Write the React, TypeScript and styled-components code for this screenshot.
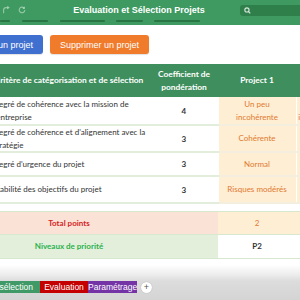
import * as React from "react";
import styled, { createGlobalStyle } from "styled-components";

const GlobalStyle = createGlobalStyle`
  html, body {
    margin: 0;
    padding: 0;
    background: #fff;
    overflow: hidden;
  }
  body {
    font-family: "Liberation Sans", Arial, sans-serif;
  }
`;

const Page = styled.div`
  width: 300px;
  height: 300px;
  overflow: hidden;
  background: #fff;
  display: flex;
  flex-direction: column;
`;

const Content = styled.div`
  flex: 1;
  min-height: 0;
  overflow: hidden;
  display: flex;
  flex-direction: column;
`;

const TopBar = styled.div`
  height: 25px;
  flex: none;
  background: #3e9a60;
  display: flex;
  flex-direction: column;
`;

const TopRow = styled.div`
  height: 19px;
  display: flex;
  align-items: center;
`;

const QuickIcons = styled.div`
  width: 36px;
  display: flex;
  align-items: center;
  gap: 8px;
  padding-left: 2px;
  color: rgba(255, 255, 255, 0.45);
`;

const Title = styled.div`
  flex: 1;
  text-align: center;
  color: #fff;
  font-weight: bold;
  font-size: 9px;
  padding-top: 1px;
`;

const SearchBox = styled.div`
  width: 56px;
  height: 11px;
  margin-top: 1px;
  background: #2f7f4b;
  border-radius: 3px 0 0 3px;
  display: flex;
  align-items: center;
  padding-left: 4px;
  color: rgba(255, 255, 255, 0.8);
`;

const Ribbon = styled.div`
  display: flex;
  height: 2px;
  margin-top: 1px;
`;

const RibbonSegment = styled.div<{ $w: number; $gap: number }>`
  width: ${(p) => p.$w}px;
  margin-left: ${(p) => p.$gap}px;
  height: 2px;
  border-radius: 1px;
  background: #2a7544;
`;

const ButtonRow = styled.div`
  width: 149px;
  height: 19px;
  margin-top: 10px;
  flex: none;
  display: flex;
  justify-content: flex-end;
  gap: 7px;
`;

const ActionButton = styled.button<{ $tone: "blue" | "orange" }>`
  flex: none;
  border: none;
  border-radius: 3px;
  padding: 0 10px;
  height: 19px;
  font-family: "Liberation Sans", Arial, sans-serif;
  font-size: 9px;
  color: #fff;
  white-space: nowrap;
  background: ${(p) => (p.$tone === "blue" ? "#3f6fcf" : "#f07b2b")};
  box-shadow: 0 1px 1px rgba(0, 0, 0, 0.12);
`;

const Table = styled.table`
  margin-top: 10px;
  margin-left: -12px;
  border-collapse: collapse;
  table-layout: fixed;
  width: 386px;
  font-family: Lato, "Liberation Sans", sans-serif;
  font-size: 8px;
  flex: none;

  td,
  th {
    padding-top: 0;
    padding-bottom: 0;
  }
`;

const HeadCell = styled.th`
  background: #3f8f5e;
  color: #fff;
  font-weight: bold;
  height: 33px;
  padding: 0 2px;
  text-align: center;
  line-height: 13px;
  font-size: 8.4px;
  white-space: nowrap;
`;

const LabelCell = styled.td`
  color: #333;
  padding: 0 4px 0 5px;
  line-height: 12.5px;
  border-bottom: 2px solid #e2eedb;
`;

const NumCell = styled.td`
  text-align: center;
  font-weight: bold;
  color: #333;
  border-bottom: 2px solid #e2eedb;
`;

const ValueCell = styled.td<{ $edge?: boolean }>`
  background: #fdeed4;
  color: #e27a2f;
  text-align: center;
  line-height: 12.5px;
  padding: ${(p) => (p.$edge ? "0 33px 0 1px" : "0 8px")};
  border-bottom: 2px solid #f3eedd;
  border-left: 1px solid #fff;
`;

const DataRow = styled.tr<{ $h: number }>`
  height: ${(p) => p.$h}px;
`;

const SpacerRow = styled.tr`
  height: 8px;
`;

const SumCell = styled.td<{ $kind: "total" | "priority" }>`
  background: ${(p) => (p.$kind === "total" ? "#fbe2d6" : "#e3efdb")};
  color: ${(p) => (p.$kind === "total" ? "#d42424" : "#2bb14e")};
  font-weight: bold;
  text-align: center;
  border-top: 1px solid #d8e8cf;
  border-bottom: 1px solid #d8e8cf;
`;

const SumValue = styled.td<{ $kind: "total" | "priority" }>`
  background: ${(p) => (p.$kind === "total" ? "#fdeed4" : "#fff")};
  color: ${(p) => (p.$kind === "total" ? "#e27a2f" : "#333")};
  font-weight: ${(p) => (p.$kind === "total" ? "normal" : "bold")};
  text-align: center;
  border-top: 1px solid #d8e8cf;
  border-bottom: 1px solid #d8e8cf;
`;

const Footer = styled.div`
  height: 35px;
  flex: none;
  background: linear-gradient(to bottom, #fff 0px, #ececec 10px, #dcdcdc 16px, #d4d4d4 35px);
  display: flex;
  align-items: flex-start;
  padding-top: 16px;
  box-sizing: border-box;
`;

const TabStrip = styled.div`
  width: 137px;
  display: flex;
  justify-content: flex-end;
`;

const SheetTab = styled.div<{ $bg: string; $w?: number }>`
  flex: none;
  height: 12px;
  line-height: 12px;
  ${(p) => (p.$w ? `width: ${p.$w}px;` : "padding: 0 7px;")}
  text-align: center;
  background: ${(p) => p.$bg};
  color: #fff;
  font-size: 8.5px;
  font-family: "Liberation Sans", Arial, sans-serif;
  white-space: nowrap;
`;

const AddSheet = styled.div`
  width: 11px;
  height: 11px;
  margin: 1px 0 0 4px;
  border-radius: 50%;
  background: #fff;
  color: #555;
  font-size: 9px;
  line-height: 11px;
  text-align: center;
  box-shadow: 0 0 1px rgba(0, 0, 0, 0.3);
`;

const rows = [
  { label: "Degré de cohérence avec la mission de l'entreprise", coef: 4, p1: "Un peu incohérente", p2: "Un peu incohérente", h: 28 },
  { label: "Degré de cohérence et d'alignement avec la stratégie", coef: 3, p1: "Cohérente", p2: "Cohérente", h: 24 },
  { label: "Degré d'urgence du projet", coef: 3, p1: "Normal", p2: "Normal", h: 24 },
  { label: "Stabilité des objectifs du projet", coef: 3, p1: "Risques modérés", p2: "Risques modérés", h: 24 },
];

const ribbon = [
  [10, 0],
  [26, 12],
  [45, 12],
  [27, 11],
  [46, 11],
];

export default function App() {
  return (
    <Page>
      <GlobalStyle />
      <Content>
        <TopBar>
          <TopRow>
            <QuickIcons>
              <svg width="8" height="8" viewBox="0 0 10 10" fill="none" stroke="currentColor" strokeWidth="1.4">
                <path d="M2 9V5a3 3 0 0 1 3-3h3" />
                <path d="M6.5 0.5 8.5 2 6.5 3.5" />
              </svg>
              <svg width="8" height="8" viewBox="0 0 10 10" fill="none" stroke="currentColor" strokeWidth="1.4">
                <path d="M8.5 5a3.5 3.5 0 1 1-1-2.5" />
                <path d="M8 1v2H6" />
              </svg>
            </QuickIcons>
            <Title>Evaluation et Sélection Projets</Title>
            <SearchBox>
              <svg width="7" height="7" viewBox="0 0 10 10" fill="none" stroke="currentColor" strokeWidth="1.6">
                <circle cx="4.2" cy="4.2" r="3" />
                <path d="M6.5 6.5 9 9" />
              </svg>
            </SearchBox>
          </TopRow>
          <Ribbon>
            {ribbon.map(([w, g], i) => (
              <RibbonSegment key={i} $w={w} $gap={g} />
            ))}
          </Ribbon>
        </TopBar>

        <ButtonRow>
          <ActionButton $tone="blue">Ajouter un projet</ActionButton>
          <ActionButton $tone="orange">Supprimer un projet</ActionButton>
        </ButtonRow>

        <Table>
          <colgroup>
            <col style={{ width: 162 }} />
            <col style={{ width: 68 }} />
            <col style={{ width: 78 }} />
            <col style={{ width: 78 }} />
          </colgroup>
          <thead>
            <tr>
              <HeadCell>Critère de catégorisation et de sélection</HeadCell>
              <HeadCell>
                Coefficient de
                <br />
                pondération
              </HeadCell>
              <HeadCell>Project 1</HeadCell>
              <HeadCell>Project 2</HeadCell>
            </tr>
          </thead>
          <tbody>
            {rows.map((r) => (
              <DataRow key={r.label} $h={r.h}>
                <LabelCell>{r.label}</LabelCell>
                <NumCell>{r.coef}</NumCell>
                <ValueCell>{r.p1}</ValueCell>
                <ValueCell $edge>{r.p2}</ValueCell>
              </DataRow>
            ))}
            <SpacerRow>
              <td colSpan={4} />
            </SpacerRow>
            <DataRow $h={23}>
              <SumCell $kind="total">Total points</SumCell>
              <SumCell $kind="total" />
              <SumValue $kind="total">2</SumValue>
              <SumValue $kind="total">1</SumValue>
            </DataRow>
            <DataRow $h={24}>
              <SumCell $kind="priority">Niveaux de priorité</SumCell>
              <SumCell $kind="priority" />
              <SumValue $kind="priority">P2</SumValue>
              <SumValue $kind="priority">P3</SumValue>
            </DataRow>
          </tbody>
        </Table>
      </Content>

      <Footer>
        <TabStrip>
          <SheetTab $bg="#3f9a67">Critères de sélection</SheetTab>
          <SheetTab $bg="#c40000" $w={48}>Evaluation</SheetTab>
          <SheetTab $bg="#7434a6" $w={49}>Paramétrage</SheetTab>
        </TabStrip>
        <AddSheet>+</AddSheet>
      </Footer>
    </Page>
  );
}
